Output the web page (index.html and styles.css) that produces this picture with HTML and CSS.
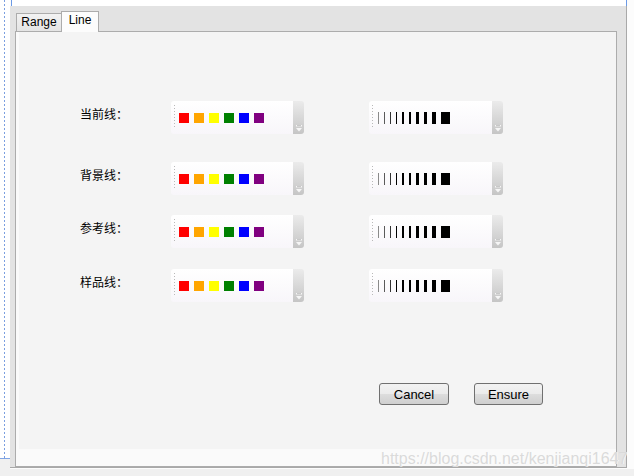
FILE: index.html
```html
<!DOCTYPE html>
<html lang="zh-CN">
<head>
    <meta charset="UTF-8">
    <meta name="viewport" content="width=device-width, initial-scale=1.0">
    <title>Line Settings</title>
    <link rel="stylesheet" href="styles.css">
</head>
<body>
    <div class="screen">
        <!-- designer guide on the left -->
        <div class="gutter"><div class="guide"></div></div>

        <div class="main">
            <div class="top-strip"></div>

            <div class="window">
                <!-- Tabs -->
                <div class="tabs">
                    <div class="tab">Range</div>
                    <div class="tab active">Line</div>
                </div>

                <div class="panel">
                    <div class="content">

                        <div class="line-row row-1">
                            <span class="label">当前线：</span>
                            <div class="combo">
                                <div class="combo-body">
                                    <span class="gripper"></span>
                                    <div class="swatches">
                                        <span class="swatch red"></span>
                                        <span class="swatch orange"></span>
                                        <span class="swatch yellow"></span>
                                        <span class="swatch green"></span>
                                        <span class="swatch blue"></span>
                                        <span class="swatch purple"></span>
                                    </div>
                                </div>
                                <div class="combo-btn"><svg width="6" height="7" viewBox="0 0 6 7"><rect x="0" y="0" width="6" height="1.5" fill="#f6f6f6"/><path d="M0 3 L6 3 L3 6.5 Z" fill="#f6f6f6"/><rect x="1" y="0.5" width="4" height="0.6" fill="#9a9a9a"/></svg></div>
                            </div>
                            <div class="combo wide">
                                <div class="combo-body">
                                    <span class="gripper"></span>
                                    <div class="widths">
                                        <span class="bar w1 g1"></span>
                                        <span class="bar w1 g2"></span>
                                        <span class="bar w1 g3"></span>
                                        <span class="bar w1"></span>
                                        <span class="bar w2"></span>
                                        <span class="bar w2"></span>
                                        <span class="bar w3"></span>
                                        <span class="bar w3"></span>
                                        <span class="bar w4"></span>
                                        <span class="bar w9"></span>
                                    </div>
                                </div>
                                <div class="combo-btn"><svg width="6" height="7" viewBox="0 0 6 7"><rect x="0" y="0" width="6" height="1.5" fill="#f6f6f6"/><path d="M0 3 L6 3 L3 6.5 Z" fill="#f6f6f6"/><rect x="1" y="0.5" width="4" height="0.6" fill="#9a9a9a"/></svg></div>
                            </div>
                        </div>

                        <div class="line-row row-2">
                            <span class="label">背景线：</span>
                            <div class="combo">
                                <div class="combo-body">
                                    <span class="gripper"></span>
                                    <div class="swatches">
                                        <span class="swatch red"></span>
                                        <span class="swatch orange"></span>
                                        <span class="swatch yellow"></span>
                                        <span class="swatch green"></span>
                                        <span class="swatch blue"></span>
                                        <span class="swatch purple"></span>
                                    </div>
                                </div>
                                <div class="combo-btn"><svg width="6" height="7" viewBox="0 0 6 7"><rect x="0" y="0" width="6" height="1.5" fill="#f6f6f6"/><path d="M0 3 L6 3 L3 6.5 Z" fill="#f6f6f6"/><rect x="1" y="0.5" width="4" height="0.6" fill="#9a9a9a"/></svg></div>
                            </div>
                            <div class="combo wide">
                                <div class="combo-body">
                                    <span class="gripper"></span>
                                    <div class="widths">
                                        <span class="bar w1 g1"></span>
                                        <span class="bar w1 g2"></span>
                                        <span class="bar w1 g3"></span>
                                        <span class="bar w1"></span>
                                        <span class="bar w2"></span>
                                        <span class="bar w2"></span>
                                        <span class="bar w3"></span>
                                        <span class="bar w3"></span>
                                        <span class="bar w4"></span>
                                        <span class="bar w9"></span>
                                    </div>
                                </div>
                                <div class="combo-btn"><svg width="6" height="7" viewBox="0 0 6 7"><rect x="0" y="0" width="6" height="1.5" fill="#f6f6f6"/><path d="M0 3 L6 3 L3 6.5 Z" fill="#f6f6f6"/><rect x="1" y="0.5" width="4" height="0.6" fill="#9a9a9a"/></svg></div>
                            </div>
                        </div>

                        <div class="line-row row-3">
                            <span class="label">参考线：</span>
                            <div class="combo">
                                <div class="combo-body">
                                    <span class="gripper"></span>
                                    <div class="swatches">
                                        <span class="swatch red"></span>
                                        <span class="swatch orange"></span>
                                        <span class="swatch yellow"></span>
                                        <span class="swatch green"></span>
                                        <span class="swatch blue"></span>
                                        <span class="swatch purple"></span>
                                    </div>
                                </div>
                                <div class="combo-btn"><svg width="6" height="7" viewBox="0 0 6 7"><rect x="0" y="0" width="6" height="1.5" fill="#f6f6f6"/><path d="M0 3 L6 3 L3 6.5 Z" fill="#f6f6f6"/><rect x="1" y="0.5" width="4" height="0.6" fill="#9a9a9a"/></svg></div>
                            </div>
                            <div class="combo wide">
                                <div class="combo-body">
                                    <span class="gripper"></span>
                                    <div class="widths">
                                        <span class="bar w1 g1"></span>
                                        <span class="bar w1 g2"></span>
                                        <span class="bar w1 g3"></span>
                                        <span class="bar w1"></span>
                                        <span class="bar w2"></span>
                                        <span class="bar w2"></span>
                                        <span class="bar w3"></span>
                                        <span class="bar w3"></span>
                                        <span class="bar w4"></span>
                                        <span class="bar w9"></span>
                                    </div>
                                </div>
                                <div class="combo-btn"><svg width="6" height="7" viewBox="0 0 6 7"><rect x="0" y="0" width="6" height="1.5" fill="#f6f6f6"/><path d="M0 3 L6 3 L3 6.5 Z" fill="#f6f6f6"/><rect x="1" y="0.5" width="4" height="0.6" fill="#9a9a9a"/></svg></div>
                            </div>
                        </div>

                        <div class="line-row row-4">
                            <span class="label">样品线：</span>
                            <div class="combo">
                                <div class="combo-body">
                                    <span class="gripper"></span>
                                    <div class="swatches">
                                        <span class="swatch red"></span>
                                        <span class="swatch orange"></span>
                                        <span class="swatch yellow"></span>
                                        <span class="swatch green"></span>
                                        <span class="swatch blue"></span>
                                        <span class="swatch purple"></span>
                                    </div>
                                </div>
                                <div class="combo-btn"><svg width="6" height="7" viewBox="0 0 6 7"><rect x="0" y="0" width="6" height="1.5" fill="#f6f6f6"/><path d="M0 3 L6 3 L3 6.5 Z" fill="#f6f6f6"/><rect x="1" y="0.5" width="4" height="0.6" fill="#9a9a9a"/></svg></div>
                            </div>
                            <div class="combo wide">
                                <div class="combo-body">
                                    <span class="gripper"></span>
                                    <div class="widths">
                                        <span class="bar w1 g1"></span>
                                        <span class="bar w1 g2"></span>
                                        <span class="bar w1 g3"></span>
                                        <span class="bar w1"></span>
                                        <span class="bar w2"></span>
                                        <span class="bar w2"></span>
                                        <span class="bar w3"></span>
                                        <span class="bar w3"></span>
                                        <span class="bar w4"></span>
                                        <span class="bar w9"></span>
                                    </div>
                                </div>
                                <div class="combo-btn"><svg width="6" height="7" viewBox="0 0 6 7"><rect x="0" y="0" width="6" height="1.5" fill="#f6f6f6"/><path d="M0 3 L6 3 L3 6.5 Z" fill="#f6f6f6"/><rect x="1" y="0.5" width="4" height="0.6" fill="#9a9a9a"/></svg></div>
                            </div>
                        </div>

                        <!-- Buttons -->
                        <div class="actions">
                            <button class="btn cancel">Cancel</button>
                            <button class="btn ensure">Ensure</button>
                        </div>
                    </div>
                </div>
            </div>
        </div>

        <div class="watermark">https://blog.csdn.net/kenjianqi1647</div>
    </div>
</body>
</html>
```

FILE: styles.css
```css
/* General Layout */
body {
    margin: 0;
    padding: 0;
    background-color: #f0f0f0;
    font-family: "Liberation Sans", Arial, sans-serif;
}

.screen {
    position: relative;
    width: 634px;
    height: 476px;
    display: flex;
    align-items: flex-start;
    overflow: hidden;
}

/* Designer guide */
.gutter {
    width: 10px;
    height: 458px;
    background-color: #ffffff;
    border-bottom: 1px solid #7fa4e4;
}

.guide {
    margin-left: 4px;
    width: 1px;
    height: 100%;
    background: repeating-linear-gradient(to bottom, #7b9fe0 0 2px, transparent 2px 4px);
}

.main {
    width: 624px;
    height: 469px;
    background-color: #fcfcfc;
}

.top-strip {
    height: 6px;
    width: 616px;
    margin-left: 1px;
    background-color: #ffffff;
    border-left: 1px solid #6b9ae6;
    border-right: 1px solid #6b9ae6;
    box-sizing: border-box;
}

/* Window */
.window {
    width: 617px;
    height: 462px;
    box-sizing: border-box;
    background-color: #e3e3e3;
    border-right: 1px solid #a9a9a9;
    border-bottom: 1px solid #a9a9a9;
    padding: 5px 0 0 5px;
}

/* Tabs */
.tabs {
    display: flex;
    align-items: flex-end;
    height: 20px;
    padding-left: 1px;
}

.tab {
    box-sizing: border-box;
    width: 45px;
    height: 18px;
    border: 1px solid #acacac;
    border-right: none;
    border-bottom: none;
    background: linear-gradient(#f2f2f2, #e4e4e4);
    font-size: 12px;
    line-height: 16px;
    text-align: center;
    color: #000;
}

.tab.active {
    position: relative;
    z-index: 1;
    width: 38px;
    height: 21px;
    margin-bottom: -1px;
    border-right: 1px solid #acacac;
    background: #fcfcfc;
}

/* Panel */
.panel {
    box-sizing: border-box;
    width: 602px;
    height: 436px;
    border: 1px solid #acacac;
    background-color: #fafafa;
    padding: 0 0 17px 3px;
}

.content {
    height: 100%;
    background-color: #f4f4f4;
    display: flex;
    flex-direction: column;
}

/* Rows */
.line-row {
    display: flex;
    align-items: flex-start;
    padding-left: 61px;
    height: 33px;
}

.row-1 { margin-top: 69px; }
.row-2 { margin-top: 28px; }
.row-3 { margin-top: 20px; }
.row-4 { margin-top: 21px; }

.label {
    width: 91px;
    font-family: "Noto Sans CJK SC", sans-serif;
    font-size: 12px;
    line-height: 26px;
    color: #000;
}

/* Combo boxes */
.combo {
    display: flex;
    width: 133px;
    height: 33px;
}

.combo.wide {
    width: 134px;
    margin-left: 65px;
}

.combo-body {
    flex: 1;
    display: flex;
    align-items: flex-start;
    background: linear-gradient(#ffffff, #f8f6fa);
    border-radius: 3px 0 0 3px;
}

.gripper {
    width: 1px;
    height: 23px;
    margin: 4px 4px 0 3px;
    background: repeating-linear-gradient(to bottom, #b9b9b9 0 1px, transparent 1px 3px);
}

.combo-btn {
    width: 11px;
    display: flex;
    align-items: flex-end;
    justify-content: center;
    padding-bottom: 2px;
    box-sizing: border-box;
    background: linear-gradient(#ebebeb, #c5c5c5);
    border-radius: 0 3px 3px 0;
}

/* Colour swatches */
.swatches {
    display: flex;
    gap: 5px;
    margin-top: 12px;
}

.swatch {
    width: 10px;
    height: 10px;
}

.red { background-color: #ff0000; }
.orange { background-color: #ffa500; }
.yellow { background-color: #ffff00; }
.green { background-color: #008000; }
.blue { background-color: #0000ff; }
.purple { background-color: #800080; }

/* Line widths */
.widths {
    display: flex;
    gap: 5px;
    margin-top: 11px;
    margin-left: 1px;
}

.bar {
    height: 12px;
    background-color: #000;
}

.w1 { width: 1px; }
.w2 { width: 2px; }
.w3 { width: 3px; }
.w4 { width: 4px; }
.w9 { width: 9px; }

.g1 { background-color: #8a8a8a; }
.g2 { background-color: #5a5a5a; }
.g3 { background-color: #333; }

/* Buttons */
.actions {
    display: flex;
    gap: 25px;
    margin-top: 81px;
    padding-left: 360px;
}

.btn {
    box-sizing: border-box;
    width: 70px;
    height: 22px;
    padding: 0;
    border: 1px solid #707070;
    border-radius: 3px;
    background: linear-gradient(#f2f2f2 0%, #ebebeb 50%, #dddddd 51%, #cfcfcf 100%);
    font-family: "Liberation Sans", Arial, sans-serif;
    font-size: 13px;
    color: #000;
}

.btn.ensure {
    width: 69px;
}

/* Watermark */
.watermark {
    position: absolute;
    top: 450px;
    left: 381px;
    font-size: 16px;
    line-height: 18px;
    color: #dadada;
    text-shadow: 1px 0 0 rgba(255, 255, 255, 0.7);
}
```
